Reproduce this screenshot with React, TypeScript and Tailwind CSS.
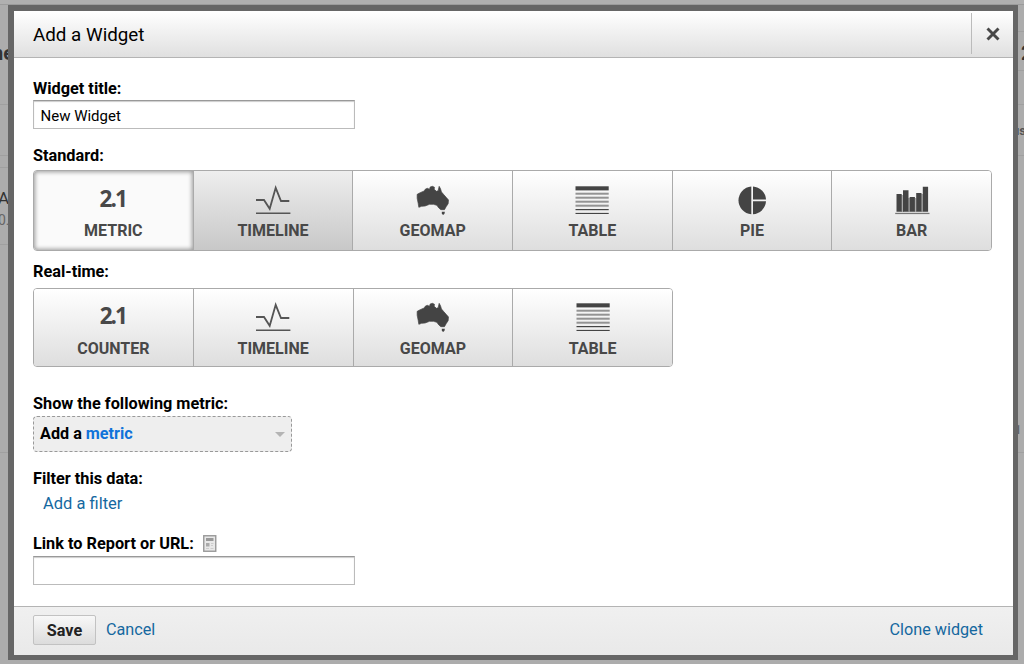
import { useState, type ReactNode } from 'react'
import { clsx } from 'clsx'

type Kind = 'number' | 'timeline' | 'geomap' | 'table' | 'pie' | 'bar'

interface Option {
  label: string
  kind: Kind
}

const standard: Option[] = [
  { label: 'METRIC', kind: 'number' },
  { label: 'TIMELINE', kind: 'timeline' },
  { label: 'GEOMAP', kind: 'geomap' },
  { label: 'TABLE', kind: 'table' },
  { label: 'PIE', kind: 'pie' },
  { label: 'BAR', kind: 'bar' },
]

const realtime: Option[] = [
  { label: 'COUNTER', kind: 'number' },
  { label: 'TIMELINE', kind: 'timeline' },
  { label: 'GEOMAP', kind: 'geomap' },
  { label: 'TABLE', kind: 'table' },
]

function WidgetIcon({ kind }: { kind: Kind }) {
  if (kind === 'number') {
    return (
      <span className="block h-9 pr-px font-['Open_Sans',sans-serif] text-[22.5px] leading-[32px] font-bold tracking-[-1.9px]">
        2.1
      </span>
    )
  }
  return (
    <svg width="36" height="36" viewBox="0 0 36 36" fill="#444">
      {kind === 'timeline' && (
        <g fill="none" stroke="#555" strokeWidth="1.8">
          <path d="M1 17h8l5.7 8.8L20.7 4.8 26 18h8.3" />
          <path d="M1 30.3h34.4" strokeWidth="1.6" />
        </g>
      )}
      {kind === 'geomap' && (
        <g transform="translate(-.5 0) scale(.3333)">
          <path d="M8 34 17 29 29 24 33 18 39 16 45 19 47 12 54 10 60 13 59 19 66 25 71 23 74 10 78 17 81 27 87 34 95 43 102 51 101 62 95 71 90 80 79 80 73 75 67 67 57 64 45 64 32 69 21 70 13 73 11 61 8 46Z" stroke="#444" strokeWidth="2" />
          <path d="M82 86h9l-1 6-4 4-4-4z" />
        </g>
      )}
      {kind === 'table' && (
        <>
          <rect x="1.5" y="3.3" width="33.2" height="4.1" />
          <g fill="#939393">
            <rect x="1.5" y="9.7" width="33.2" height="2" />
            <rect x="1.5" y="13.7" width="33.2" height="2" />
            <rect x="1.5" y="17.7" width="33.2" height="2" />
            <rect x="1.5" y="21.7" width="33.2" height="2" />
          </g>
          <rect x="1.5" y="26" width="33.2" height="1.2" />
          <rect x="1.5" y="29.9" width="33.2" height="1.1" />
        </>
      )}
      {kind === 'pie' && (
        <>
          <path d="M17.3 3.4a14 14 0 0 0 0 27.9z" />
          <path d="M19 3.4a14 14 0 0 1 13 13H19z" />
          <path d="M19 18.2h13a14 14 0 0 1-13 13z" />
        </>
      )}
      {kind === 'bar' && (
        <>
          <path fill="#aaa" d="M7 12h3v17H7zM14 15h2v14h-2zM20.5 15h2v14h-2zM27 11h2v18h-2z" />
          <path d="M2.5 11h5.2v17.7H2.5zM9 7.3h5.5v21.4H9zM15.7 14h5.2v14.7h-5.2zM22.2 10h5.3v18.7h-5.3zM28.8 3.7h5.3v25h-5.3z" />
          <rect x="1.2" y="29.8" width="34.3" height="1.3" fill="#777" />
        </>
      )}
    </svg>
  )
}

interface GroupProps {
  options: Option[]
  selected?: number
  hovered?: number
  compact?: boolean
  onSelect: (i: number) => void
}

function OptionGroup({ options, selected, hovered, compact, onSelect }: GroupProps) {
  return (
    <div
      className={clsx(
        'flex overflow-hidden rounded-[4px] border border-[#aaa]',
        compact ? 'h-[79px] w-[640px]' : 'h-[81px] w-[959px]'
      )}
    >
      {options.map((o, i) => (
        <button
          key={i}
          onClick={() => onSelect(i)}
          className={clsx(
            'flex flex-1 flex-col items-center text-[#484848]',
            compact ? 'pt-[11px]' : 'pt-[12px]',
            i > 0 && 'border-l border-[#aaa]',
            selected === i
              ? 'bg-[#fafafa] shadow-[inset_0_0_4px_1px_#999]'
              : hovered === i
                ? 'bg-linear-to-b from-[#eee] to-[#c8c8c8]'
                : 'bg-linear-to-b from-white to-[#dedede]'
          )}
        >
          <WidgetIcon kind={o.kind} />
          <span className={clsx('text-[16px] leading-[20px] font-bold', compact ? 'pt-[3px]' : 'pt-[2px]')}>{o.label}</span>
        </button>
      ))}
    </div>
  )
}

function Label({ children }: { children: ReactNode }) {
  return <div className="flex h-5 items-center text-[16.3px] leading-[20px] font-bold whitespace-nowrap">{children}</div>
}

// slices of the dimmed dashboard that stay visible beside the dialog
function Backdrop() {
  return (
    <div className="absolute inset-0 bg-[#acacac] text-[#333]">
      <div className="h-[5px] border-b border-[#9c9c9c] bg-[#b0b0b0]" />
      <div className="flex justify-between">
        <div className="h-[659px] w-[14px] overflow-hidden">
          <div className="flex h-[100px] justify-end border-b border-[#a0a0a0] pt-[36px] text-[20px] leading-[24px] font-bold">ne</div>
          <div className="h-[51px] border-b border-[#a0a0a0]" />
          <div className="h-[12px] border-b border-[#a0a0a0]" />
          <div className="h-[77px] border-b border-[#a0a0a0] pt-[20px]">
            <div className="-ml-[2px] text-[17px] leading-[20px]">A</div>
            <div className="-ml-[2px] pt-[2px] text-[14px] leading-[20px] text-[#666]">0.</div>
          </div>
          <div className="h-[208px] border-b border-[#a0a0a0]" />
        </div>
        <div className="h-[659px] w-[6px] overflow-hidden">
          <div className="h-[27px] border-b border-[#a0a0a0]" />
          <div className="h-[39px] border-b border-[#a0a0a0] pt-[9px] pl-[3px] text-[20px] leading-[24px] font-bold">2</div>
          <div className="h-[34px] border-b border-[#a0a0a0]" />
          <div className="h-[51px] border-b border-[#a0a0a0] pt-[16px]">
            <div className="-ml-[6px] text-[13px] leading-[20px] font-bold text-[#555]">us</div>
          </div>
          <div className="h-[297px] border-b border-[#a0a0a0] pt-[264px]">
            <div className="-ml-[4px] text-[13px] leading-[20px] font-bold text-[#666]">1</div>
          </div>
        </div>
      </div>
    </div>
  )
}

export default function App() {
  const [title, setTitle] = useState('New Widget')
  const [url, setUrl] = useState('')
  const [std, setStd] = useState<number | undefined>(0)
  const [live, setLive] = useState<number | undefined>(undefined)

  return (
    <div className="relative h-[664px] w-[1024px] overflow-hidden font-[Roboto,sans-serif] text-black">
      <Backdrop />
      <div className="relative mt-[5px] ml-[8px] flex h-[655px] w-[1010px] flex-col border-[5px] border-l-[6px] border-t-[6px] border-[#666] bg-white">
        <div className="flex h-[47px] shrink-0 justify-between border-b border-[#b4b4b4] bg-linear-to-b from-white to-[#e0e0e0] pl-[19px]">
          <h2 className="text-[18.8px] leading-[48px]">Add a Widget</h2>
          <button className="mt-[2px] flex h-[41px] w-[42px] items-center justify-center border-l border-[#bbb]">
            <svg width="14" height="14" viewBox="0 0 14 14" stroke="#484848" strokeWidth="2.9">
              <path d="M1.5 1.5 12.5 12.5M12.5 1.5 1.5 12.5" />
            </svg>
          </button>
        </div>

        <div className="flex-1 px-[19px] pt-[21px]">
          <Label>Widget title:</Label>
          <input
            value={title}
            onChange={e => setTitle(e.target.value)}
            className="mt-px block h-[29px] w-[322px] border border-[#bbb] border-t-[#999] px-[6.5px] pt-[2px] text-[15px] shadow-[inset_0_1px_1px_#ccc] outline-none"
          />

          <div className="pt-[17px] pb-[4px]">
            <Label>Standard:</Label>
          </div>
          <OptionGroup options={standard} selected={std} hovered={1} onSelect={i => { setStd(i); setLive(undefined) }} />

          <div className="pt-[11px] pb-[6px]">
            <Label>Real-time:</Label>
          </div>
          <OptionGroup options={realtime} selected={live} compact onSelect={i => { setLive(i); setStd(undefined) }} />

          <div className="pt-[27px] pb-[2px]">
            <Label>Show the following metric:</Label>
          </div>
          <button className="flex h-[36px] w-[259px] items-center justify-between rounded-[4px] border border-dashed border-[#999] bg-[#eee] px-[6px] text-[16.2px] font-bold">
            <span>Add a <span className="text-[#0f73da]">metric</span></span>
            <svg width="10" height="5" viewBox="0 0 10 5" fill="#b4b4b4"><path d="M0 0h10L5 5z" /></svg>
          </button>

          <div className="pt-[17px]">
            <Label>Filter this data:</Label>
          </div>
          <a className="mt-[5px] ml-[10px] block text-[16.5px] leading-[20px] text-[#15689f]">Add a filter</a>

          <div className="pt-[20px]">
            <Label>
              Link to Report or URL:
              <svg className="mb-px ml-[9px]" width="14" height="17" viewBox="0 0 14 17">
                <rect x=".75" y=".75" width="12" height="15.5" fill="#e8e8e8" stroke="#999" strokeWidth="1.4" />
                <rect x="3" y="3" width="7.5" height="3" fill="#999" />
                <rect x="3" y="8" width="3.5" height="3.5" fill="#aaa" />
                <path d="M8 8.5h2.5M8 10.5h2M3 13.5h3M7.5 13.5h3" stroke="#ccc" />
              </svg>
            </Label>
          </div>
          <input
            value={url}
            onChange={e => setUrl(e.target.value)}
            className="mt-[2px] block h-[29px] w-[322px] border border-[#bbb] border-t-[#999] px-[6.5px] text-[15px] shadow-[inset_0_1px_1px_#ccc] outline-none"
          />
        </div>

        <div className="flex h-[49px] shrink-0 items-start border-t border-[#b4b4b4] bg-linear-to-b from-[#f0f0f0] to-[#e9e9e9] pr-[30px] pl-[19px] text-[16.2px]">
          <button className="mt-[8px] h-[30px] w-[63px] rounded-[2px] border border-[#c2c2c2] bg-linear-to-b from-[#f8f8f8] to-[#dcdcdc] pt-[2px] font-bold text-[#222]">
            Save
          </button>
          <a className="mt-[13px] ml-[10px] leading-[20px] text-[#15689f]">Cancel</a>
          <a className="mt-[13px] ml-auto leading-[20px] text-[#15689f]">Clone widget</a>
        </div>
      </div>
    </div>
  )
}
